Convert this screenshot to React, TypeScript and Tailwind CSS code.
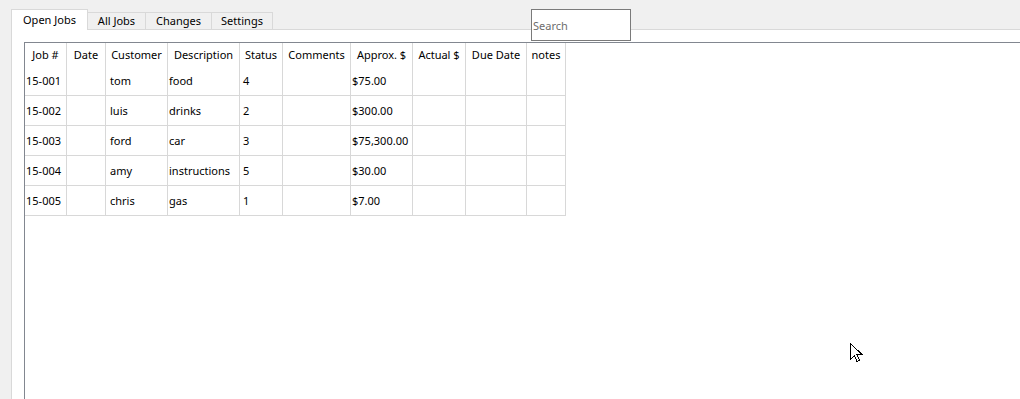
import React from 'react'

const COLS = [
  { label: 'Job #', w: 'w-[42px]', pad: 'pl-[1px]' },
  { label: 'Date', w: 'w-[39px]', pad: 'pl-[1px]' },
  { label: 'Customer', w: 'w-[62px]', pad: 'pl-[4px]' },
  { label: 'Description', w: 'w-[72px]', pad: 'pl-[1px]' },
  { label: 'Status', w: 'w-[43px]', pad: 'pl-[3px]' },
  { label: 'Comments', w: 'w-[68px]', pad: 'pl-[1px]' },
  { label: 'Approx. $', w: 'w-[62px]', pad: 'pl-[1px]' },
  { label: 'Actual $', w: 'w-[53px]', pad: 'pl-[1px]' },
  { label: 'Due Date', w: 'w-[61px]', pad: 'pl-[1px]' },
  { label: 'notes', w: 'w-[39px]', pad: 'pl-[1px]' },
]

const ROWS = [
  ['15-001', '', 'tom', 'food', '4', '', '$75.00', '', '', ''],
  ['15-002', '', 'luis', 'drinks', '2', '', '$300.00', '', '', ''],
  ['15-003', '', 'ford', 'car', '3', '', '$75,300.00', '', '', ''],
  ['15-004', '', 'amy', 'instructions', '5', '', '$30.00', '', '', ''],
  ['15-005', '', 'chris', 'gas', '1', '', '$7.00', '', '', ''],
]

const TABS = [
  { label: 'All Jobs', w: 'w-[58px]' },
  { label: 'Changes', w: 'w-[66px]' },
  { label: 'Settings', w: 'w-[61px]' },
]

function Cursor() {
  return (
    <svg
      className="absolute left-[850px] top-[343px]"
      width="13"
      height="20"
      viewBox="0 0 13 20"
      shapeRendering="crispEdges"
    >
      <path
        d="M0.5 0.5 L0.5 16.5 L4.5 12.5 L7 18.5 L9.5 17.5 L7 11.5 L12 11.5 Z"
        fill="#fff"
        stroke="#000"
        strokeWidth="1"
        strokeLinejoin="miter"
      />
    </svg>
  )
}

export default function App() {
  return (
    <div
      className="relative flex h-[399px] w-[1020px] flex-col overflow-hidden bg-[#f0f0f0] pl-[11px] pt-[9px] text-[11px] text-black"
      style={{ fontFamily: '"Noto Sans", "Open Sans", sans-serif' }}
    >
      {/* tab strip */}
      <div className="flex h-[20px] items-end">
        <div className="relative z-10 mb-[-1px] flex h-[21px] w-[77px] items-center justify-center border border-b-0 border-[#d9d9d9] bg-white pt-[1px]">
          Open Jobs
        </div>
        {TABS.map((t) => (
          <div
            key={t.label}
            className={`flex h-[17px] ${t.w} items-center justify-center border-r border-t border-[#d9d9d9] bg-[#f0f0f0] pt-[1px]`}
          >
            {t.label}
          </div>
        ))}
      </div>

      {/* tab pane */}
      <div className="flex flex-1 flex-col border-l border-t border-[#d9d9d9] bg-white pl-[12px] pt-[12px]">
        <div className="flex-1 border-l border-t border-[#828790] bg-white">
          <div className="flex h-[23px]">
            {COLS.map((c) => (
              <div
                key={c.label}
                className={`${c.w} flex shrink-0 items-center justify-center whitespace-nowrap border-r border-[#d8d8d8] pt-[2px]`}
              >
                {c.label}
              </div>
            ))}
          </div>
          {ROWS.map((r, i) => (
            <div key={i} className="flex h-[30px]">
              {r.map((v, j) => (
                <div
                  key={j}
                  className={`${COLS[j].w} ${COLS[j].pad} flex shrink-0 items-center whitespace-nowrap border-b border-r border-[#d8d8d8] pt-[2px]`}
                >
                  {v}
                </div>
              ))}
            </div>
          ))}
        </div>
      </div>

      {/* search field */}
      <div className="absolute left-[531px] top-[9px] flex h-[32px] w-[100px] items-center border border-[#7a7a7a] bg-white pl-[1px] pt-[3px] text-[11px] text-[#6d6d6d]">
        Search
      </div>

      <Cursor />
    </div>
  )
}
